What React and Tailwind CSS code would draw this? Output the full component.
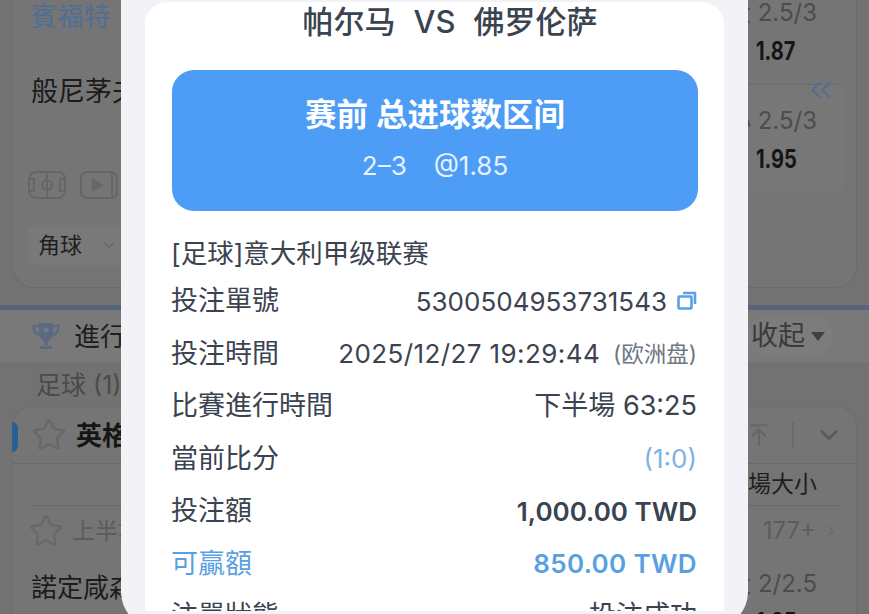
import React from 'react';
import { ChevronDown, ChevronRight, ChevronsLeft, Star, ArrowUpToLine } from 'lucide-react';

const rows = [
  { label: '投注單號', value: '5300504953731543', copy: true },
  { label: '投注時間', value: '2025/12/27 19:29:44', note: '(欧洲盘)', valueClass: 'tracking-[0.4px]' },
  { label: '比賽進行時間', value: '下半場 63:25', valueClass: 'text-[27px]' },
  { label: '當前比分', value: '(1:0)', valueClass: 'text-[#7fb2e6]' },
  { label: '投注額', value: '1,000.00 TWD', valueClass: 'font-semibold text-[#3a4350]' },
  { label: '可贏額', value: '850.00 TWD', labelClass: 'text-[#5b9fe3]', valueClass: 'font-semibold tracking-[0.35px] text-[#5b9fe3]' },
  { label: '注單狀態', value: '投注成功', valueClass: 'text-[27px]' },
];

const CopyIcon = () => (
  <svg width="20" height="20" viewBox="0 0 20 20" fill="none" stroke="#5b9fe8" strokeWidth="2.6" className="ml-[10px]">
    <rect x="1.5" y="5.5" width="13" height="12" rx="1" />
    <path d="M6 2h12v11" />
  </svg>
);

const FieldIcon = () => (
  <svg width="40" height="30" viewBox="0 0 40 30" fill="none" stroke="#666" strokeWidth="2">
    <rect x="2" y="2" width="36" height="26" rx="7" />
    <path d="M20 2v26M2 9h5v12H2M38 9h-5v12h5" />
    <circle cx="20" cy="15" r="5" />
  </svg>
);

const VideoIcon = () => (
  <svg width="40" height="30" viewBox="0 0 40 30" fill="none" stroke="#666" strokeWidth="2">
    <rect x="2" y="2" width="36" height="26" rx="6" />
    <path d="M13 8l12 7-12 7z" fill="#666" stroke="none" />
    <path d="M33 2v26" />
  </svg>
);

const TrophyIcon = () => (
  <svg width="30" height="30" viewBox="0 0 30 30" fill="none">
    <path d="M8 2h14v10c0 5-3 8-7 8s-7-3-7-8z" fill="#5c6a80" />
    <path d="M8 5H2.500c0 5 2 8 6 9M22 5h5.500c0 5-2 8-6 9" stroke="#5c6a80" strokeWidth="2.500" />
    <path d="M13 19h4v5h-4zM9 25h12v3H9z" fill="#5c6a80" />
    <circle cx="15" cy="9" r="2.500" fill="#707a8a" />
  </svg>
);

const OddsCell = ({ label, odds, className }) => (
  <div className={`flex flex-col rounded-lg ${className}`}>
    <span className="flex justify-end whitespace-nowrap pr-[27px] text-[24px] leading-[28px] text-[#4c4c4c]">{label}</span>
    <span className="mt-[10px] ml-[12px] origin-left scale-x-[0.8] text-[25px] leading-[28px] font-bold text-[#151515]">{odds}</span>
  </div>
);

export default function App() {
  return (
    <div className="relative w-[869px] h-[614px] overflow-hidden bg-[#727272] font-['Inter','Noto_Sans_CJK_SC',sans-serif]">
      {/* Pagina de fondo, oscurecida */}
      <div className="flex flex-col">
        <div className="mx-3 h-[288px] flex justify-between rounded-b-[22px] border border-t-0 border-[#6b6b6b] bg-[#757575] pl-[18px] pr-[12px]">
          <div className="flex flex-col items-start">
            <span className="mt-[-1px] text-[26px] leading-[36px] text-[#4f6e94] tracking-wide">賓福特</span>
            <span className="mt-[39px] text-[27px] leading-[36px] text-[#1c1c1c] whitespace-nowrap">般尼茅夫</span>
            <div className="mt-[60px] flex gap-[12px] -ml-[4px]">
              <FieldIcon />
              <VideoIcon />
            </div>
            <div className="mt-[25px] -ml-[3px] flex items-center gap-[18px] h-[40px] w-[130px] rounded-lg bg-[#797979] pl-[10px]">
              <span className="text-[22px] text-[#1f1f1f]">角球</span>
              <ChevronDown size={18} color="#666" />
            </div>
          </div>
          <div className="relative w-[100px] flex flex-col">
            <OddsCell label="大 2.5/3" odds="1.87" className="h-[86px] -mt-[1px] border-b border-[#6c6c6c]" />
            <OddsCell label="小 2.5/3" odds="1.95" className="h-[108px] pt-[22px] bg-[#777777]" />
            <ChevronsLeft size={34} strokeWidth={1.4} color="#4f6e94" className="absolute right-[6px] top-[73px]" />
          </div>
        </div>

        <div className="mt-[17px] h-[5px] bg-[#56657a]" />

        <div className="flex h-[52px] items-center justify-between bg-[#797979] pl-[31px] pr-[36px]">
          <div className="flex items-center gap-[13px]">
            <TrophyIcon />
            <span className="text-[26px] text-[#1f1f1f] whitespace-nowrap">進行中</span>
          </div>
          <div className="flex items-center gap-[6px] rounded-full bg-[#7c7c7c] h-[40px] pl-[4px] pr-[8px]">
            <span className="text-[27px] text-[#3a3a3a]">收起</span>
            <span className="h-0 w-0 border-x-[7px] border-t-[9px] border-x-transparent border-t-[#3f3f4a]" />
          </div>
        </div>

        <div className="pl-[36px] pt-[5px] h-[44px] text-[25px] leading-[36px] text-[#4a4a4a] whitespace-nowrap">足球 (1)</div>

        <div className="relative mx-3 flex flex-col rounded-t-[20px] border border-b-0 border-[#6d6d6d] bg-[#757575]">
          <span className="absolute -left-[1px] top-[15px] h-[30px] w-[6px] rounded-r-full bg-[#2a5f96]" />
          <div className="flex h-[57px] items-center justify-between border-b border-[#6a6a6a] pl-[18px] pr-[12px]">
            <div className="flex items-center gap-[9px]">
              <Star size={36} strokeWidth={1.5} color="#676767" />
              <span className="text-[26px] font-bold text-[#161616] whitespace-nowrap">英格蘭</span>
            </div>
            <div className="flex items-center gap-[20px]">
              <ArrowUpToLine size={26} color="#666" />
              <span className="h-[26px] w-[2px] bg-[#6b6b6b]" />
              <ChevronDown size={30} color="#5a5a5a" />
            </div>
          </div>
          <div className="mx-[16px] flex h-[42px] items-center justify-end border-b border-[#6a6a6a] pr-[23px] text-[23px] text-[#1f1f1f]">全場大小</div>
          <div className="flex h-[50px] items-center justify-between pl-[15px] pr-[16px]">
            <div className="flex items-center gap-[8px]">
              <Star size={36} strokeWidth={1.5} color="#676767" />
              <span className="text-[23px] text-[#5b5b5b] whitespace-nowrap">上半場</span>
            </div>
            <div className="flex items-center gap-[6px] text-[24px] text-[#5c5c5c]">
              177+
              <ChevronRight size={18} color="#6a6a6a" />
            </div>
          </div>
          <div className="flex h-[70px] items-start justify-between pl-[18px] pr-[12px] pt-[14px]">
            <span className="text-[26px] leading-[36px] text-[#1c1c1c] whitespace-nowrap">諾定咸森林</span>
            <OddsCell label="大 2/2.5" odds="1.85" className="w-[100px]" />
          </div>
        </div>
      </div>

      {/* Modal */}
      <div className="absolute left-[121px] top-0 h-[628px] w-[627px] rounded-b-[36px] bg-[#f2f2f7] px-[24px] pt-[2px]">
        <div className="flex h-[609px] flex-col overflow-hidden rounded-t-[22px] bg-white pl-[27px] pr-[26px]">
          <div className="flex h-[40px] shrink-0 items-center justify-center gap-[18px] pl-[30px] text-[31px] font-medium text-[#3a4350] whitespace-nowrap">
            <span>帕尔马</span>
            <span>VS</span>
            <span>佛罗伦萨</span>
          </div>
          <div className="mt-[28px] flex h-[141px] shrink-0 flex-col items-center rounded-[22px] bg-[#4d9cf6] text-white">
            <span className="mt-[23px] text-[31.5px] leading-[44px] font-semibold">赛前 总进球数区间</span>
            <div className="mt-[11px] flex gap-[27px] text-[26px] leading-[36px] text-[#e6f1ff]">
              <span>2–3</span>
              <span>@1.85</span>
            </div>
          </div>
          <div className="mt-[23px] -ml-[1px] shrink-0 text-[26.5px] leading-[38px] text-[#3b4350] whitespace-nowrap">[足球]意大利甲级联赛</div>
          <div className="mt-[3px] flex shrink-0 flex-col">
            {rows.map(row => (
              <div key={row.label} className="flex h-[52.5px] items-center justify-between -ml-[1px] pr-[1px] text-[26px] text-[#3b4350] whitespace-nowrap">
                <span className={`text-[27px] ${row.labelClass || ''}`}>{row.label}</span>
                <span className={`flex items-center ${row.valueClass || ''}`}>
                  {row.value}
                  {row.copy && <CopyIcon />}
                  {row.note && <span className="ml-[13px] tracking-normal text-[22.5px] text-[#6f7682]">{row.note}</span>}
                </span>
              </div>
            ))}
          </div>
        </div>
      </div>
    </div>
  );
}
